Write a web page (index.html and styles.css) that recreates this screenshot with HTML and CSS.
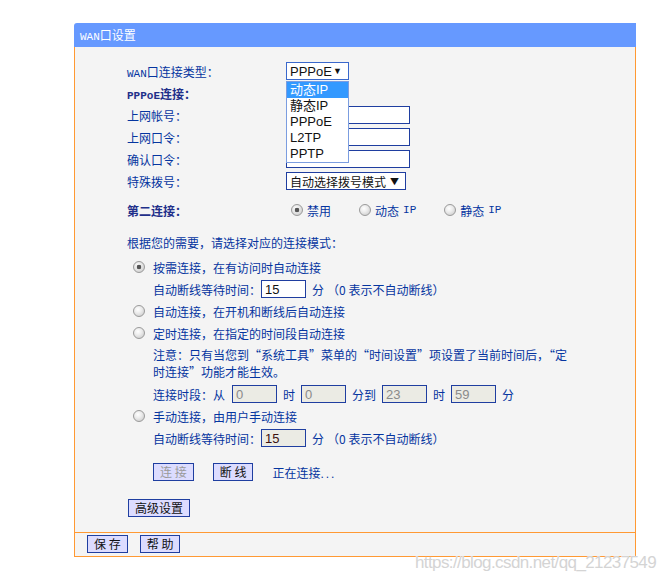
FILE: index.html
```html
<!DOCTYPE html>
<html lang="zh-CN">
<head>
<meta charset="utf-8">
<title>WAN口设置</title>
<link rel="stylesheet" href="styles.css">
</head>
<body>
<div class="page">
  <div class="panel">
    <div class="panel-head"><span class="lat">WAN</span>口设置</div>
    <div class="panel-body">
      <div class="form-grid">
        <div class="label"><span class="lat">WAN</span>口连接类型：</div>
        <div class="field">
          <div class="select-wrap">
            <div class="select select-focus"><span>PPPoE</span><span class="arrow">▼</span></div>
            <ul class="dropdown">
              <li class="active">动态IP</li>
              <li>静态IP</li>
              <li>PPPoE</li>
              <li>L2TP</li>
              <li>PPTP</li>
            </ul>
          </div>
        </div>
        <div class="label bold"><span class="lat">PPPoE</span>连接：</div>
        <div class="field"></div>
        <div class="label">上网帐号：</div>
        <div class="field"><input class="text-input" type="text"></div>
        <div class="label">上网口令：</div>
        <div class="field"><input class="text-input" type="password"></div>
        <div class="label">确认口令：</div>
        <div class="field"><input class="text-input" type="password"></div>
        <div class="label">特殊拨号：</div>
        <div class="field"><div class="select select-dial"><span>自动选择拨号模式</span><span class="arrow">▼</span></div></div>
      </div>

      <div class="form-grid second-row">
        <div class="label bold">第二连接：</div>
        <div class="field radio-row">
          <label class="opt"><input class="radio" type="radio" name="second" checked>禁用</label>
          <label class="opt"><input class="radio" type="radio" name="second">动态<span class="lat ip">IP</span></label>
          <label class="opt"><input class="radio" type="radio" name="second">静态<span class="lat ip">IP</span></label>
        </div>
      </div>

      <div class="mode-intro">根据您的需要，请选择对应的连接模式：</div>

      <div class="modes">
        <label class="mode-row"><input class="radio" type="radio" name="mode" checked>按需连接，在有访问时自动连接</label>
        <div class="sub-row">自动断线等待时间：<input class="num-input" type="text" value="15"><span class="unit">分</span><span class="hint">（0 表示不自动断线）</span></div>
        <label class="mode-row"><input class="radio" type="radio" name="mode">自动连接，在开机和断线后自动连接</label>
        <label class="mode-row"><input class="radio" type="radio" name="mode">定时连接，在指定的时间段自动连接</label>
        <p class="note">注意：只有当您到“系统工具”菜单的“时间设置”项设置了当前时间后，“定<br>时连接”功能才能生效。</p>
        <div class="sub-row"><span class="lead">连接时段：从</span><input class="num-input off" type="text" value="0" disabled><span class="unit">时</span><input class="num-input off" type="text" value="0" disabled><span class="unit">分到</span><input class="num-input off" type="text" value="23" disabled><span class="unit">时</span><input class="num-input off" type="text" value="59" disabled><span class="unit">分</span></div>
        <label class="mode-row"><input class="radio" type="radio" name="mode">手动连接，由用户手动连接</label>
        <div class="sub-row">自动断线等待时间：<input class="num-input ro" type="text" value="15" readonly><span class="unit">分</span><span class="hint">（0 表示不自动断线）</span></div>
      </div>

      <div class="action-row">
        <button class="btn btn-disabled" type="button">连 接</button>
        <button class="btn" type="button">断 线</button>
        <span class="status">正在连接<span class="dots">...</span></span>
      </div>

      <div class="advanced-row">
        <button class="btn" type="button">高级设置</button>
      </div>
    </div>
    <div class="panel-foot">
      <button class="btn" type="button">保 存</button>
      <button class="btn" type="button">帮 助</button>
    </div>
  </div>
  <div class="watermark">https://blog.csdn.net/qq_21237549</div>
</div>
</body>
</html>
```

FILE: styles.css
```css
html, body {
  margin: 0;
  padding: 0;
  background: #ffffff;
}

body {
  font-family: "Noto Sans CJK SC", "Noto Sans", sans-serif;
  font-size: 12px;
  color: #0535a0;
}

.page {
  position: relative;
  width: 666px;
  height: 582px;
  padding: 23px 0 0 74px;
  box-sizing: border-box;
  overflow: hidden;
}

.lat {
  font-family: "Liberation Mono", "Noto Sans CJK SC", monospace;
  font-size: 11px;
}

.ip {
  margin-left: 4px;
}

.panel {
  width: 562px;
}

.panel-head {
  height: 24px;
  line-height: 24px;
  padding-left: 6px;
  background: #6699ff;
  color: #ffffff;
  border-radius: 3px 0 0 0;
}

.panel-body {
  background: #f4f4f4;
  border-left: 1px solid #ff9933;
  border-right: 1px solid #ff9933;
  padding: 13px 0 15px 0;
}

.form-grid {
  display: grid;
  grid-template-columns: 159px auto;
  grid-auto-rows: 22px;
  align-items: center;
  padding-left: 52px;
}

.second-row {
  margin-top: 7px;
}

.label {
  white-space: nowrap;
}

.bold {
  font-weight: bold;
  color: #1f2f8a;
}

.field {
  display: flex;
  align-items: center;
}

.select-wrap {
  position: relative;
}

.select {
  display: flex;
  align-items: center;
  justify-content: space-between;
  box-sizing: border-box;
  height: 18px;
  padding: 0 6px 0 3px;
  background: #ffffff;
  border: 1px solid #1f3ea0;
  color: #111111;
}

.select-focus {
  width: 63px;
  border-color: #3a68cc;
  font-family: "Liberation Sans", "Noto Sans CJK SC", sans-serif;
  font-size: 13px;
}

.select-dial {
  width: 120px;
  padding-left: 3px;
}

.arrow {
  font-size: 9px;
  color: #111111;
}

.dropdown {
  position: absolute;
  left: 0;
  top: 19px;
  z-index: 2;
  width: 63px;
  box-sizing: border-box;
  margin: 0;
  padding: 0;
  list-style: none;
  background: #ffffff;
  border: 1px solid #7b9de0;
  font-family: "Liberation Sans", "Noto Sans CJK SC", sans-serif;
  font-size: 13px;
  color: #111111;
}

.dropdown li {
  height: 16px;
  line-height: 16px;
  padding-left: 3px;
}

.dropdown li.active {
  background: #3399ff;
  color: #ffffff;
}

.text-input {
  width: 124px;
  height: 18px;
  box-sizing: border-box;
  margin: 0;
  border: 1px solid #1f3ea0;
  background: #ffffff;
  padding: 0 3px;
}

.radio-row {
  padding-left: 5px;
  gap: 28px;
}

.opt {
  display: flex;
  align-items: center;
}

.radio {
  appearance: none;
  -webkit-appearance: none;
  width: 12px;
  height: 12px;
  margin: 0 4px 0 0;
  border: 1px solid #9a9a9a;
  border-radius: 50%;
  box-sizing: border-box;
  background: radial-gradient(circle at 40% 35%, #ffffff 0%, #ececec 40%, #c4c4c4 100%);
  flex: none;
}

.radio:checked {
  background:
    radial-gradient(circle at 50% 50%, #555555 0, #555555 2px, transparent 2.6px),
    radial-gradient(circle at 40% 35%, #ffffff 0%, #e8e8e8 40%, #c4c4c4 100%);
}

.mode-intro {
  height: 22px;
  line-height: 22px;
  margin-top: 11px;
  padding-left: 52px;
}

.modes {
  margin-top: 2px;
  padding-left: 58px;
}

.mode-row {
  display: flex;
  align-items: center;
  height: 22px;
}

.mode-row .radio {
  margin-right: 8px;
}

.sub-row {
  display: flex;
  align-items: center;
  height: 22px;
  padding-left: 20px;
  white-space: nowrap;
}

.lead {
  margin-right: 7px;
}

.num-input {
  width: 45px;
  height: 18px;
  box-sizing: border-box;
  margin: 0;
  padding: 0 3px;
  border: 1px solid #1f3ea0;
  background: #ffffff;
  font-family: "Liberation Sans", sans-serif;
  font-size: 13px;
  color: #111111;
}

.num-input.off {
  background: #ebebe4;
  color: #8a8a8a;
}

.num-input.ro {
  background: #ebebe4;
  color: #3a1010;
}

.unit {
  margin: 0 6px;
}

.hint {
  margin-left: -3px;
}

.note {
  margin: 2px 0 3px 0;
  padding-left: 20px;
  line-height: 17px;
}

.action-row {
  display: flex;
  align-items: center;
  gap: 19px;
  margin-top: 14px;
  padding-left: 78px;
}

.advanced-row {
  margin-top: 18px;
  padding-left: 53px;
  display: flex;
}

.btn {
  height: 18px;
  box-sizing: border-box;
  margin: 0;
  padding: 0 6px;
  border: 1px solid #1f3ea0;
  background: #dcdcff;
  color: #111111;
  font-family: "Noto Sans CJK SC", sans-serif;
  font-size: 12px;
  line-height: 16px;
  white-space: pre;
}

.btn-disabled {
  color: #9a9a9a;
}

.status {
  color: #0535a0;
}

.dots {
  letter-spacing: 2px;
  font-family: "Liberation Sans", sans-serif;
}

.panel-foot {
  display: flex;
  gap: 12px;
  padding: 2px 0 3px 12px;
  background: #f4f4f4;
  border: 1px solid #ff9933;
}

.watermark {
  position: absolute;
  left: 415px;
  top: 553px;
  font-family: "Liberation Sans", sans-serif;
  font-size: 17px;
  letter-spacing: -0.6px;
  color: #d4d4d4;
  white-space: nowrap;
  text-shadow: 0 0 1px #ffffff;
}
```
